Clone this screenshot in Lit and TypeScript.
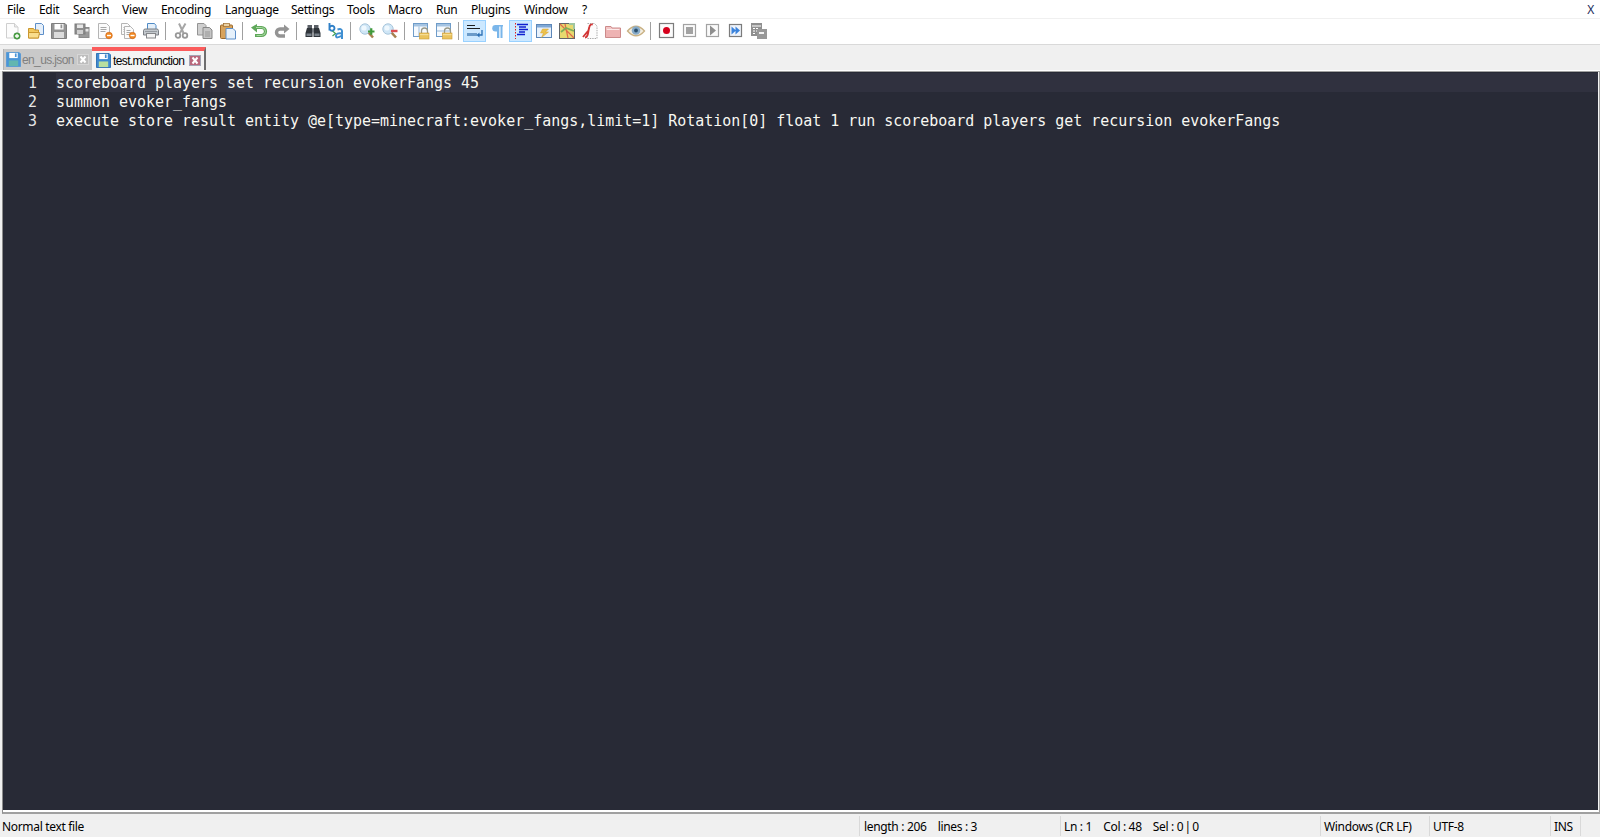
import { LitElement, html, css, svg } from "lit";
import { customElement } from "lit/decorators.js";

const floppy = (body: string, label: string, dark: string) => svg`
  <path d="M.5 .5h13.500l1.500 1.500v13.500h-15z" fill="${body}" stroke="${dark}"/>
  <rect x="3.500" y="1" width="9" height="5.500" fill="#fff"/>
  <rect x="9.500" y="1.500" width="1.800" height="3.800" fill="${body}"/>
  <rect x="3" y="9" width="10" height="6" fill="${label}"/>`;

const pageDoc = (x: number, y: number, w: number, h: number) => svg`
  <path d="M${x + .5} ${y + .5}h${w - 3}l3 3v${h - 3}h-${w}z" fill="#fbfbfb" stroke="#b5b5b5"/>
  <path d="M${x + 2.5} ${y + 4.5}h${w - 5}M${x + 2.5} ${y + 6.5}h${w - 5}M${x + 2.5} ${y + 8.5}h${w - 6}" stroke="#a8a8a8"/>`;

const lock = svg`
  <path d="M8.500 10V8a3 3 0 0 1 6 0v2" fill="none" stroke="#9a9a8a" stroke-width="1.300"/>
  <rect x="6.500" y="10" width="9.500" height="6" fill="#eac35e" stroke="#c99a35" stroke-width=".6"/>
  <rect x="7" y="11" width="8.500" height="1.200" fill="#f6dd94"/>`;

const loupe = (badge: unknown) => svg`
  <path d="M9 9l5 5.500" stroke="#a5814f" stroke-width="2.600"/>
  <circle cx="6" cy="6" r="5.200" fill="#cfe6f6" stroke="#a9c6dc"/>
  <circle cx="5" cy="5" r="2.600" fill="#eff8fe"/>
  ${badge}`;

const icons: Record<string, unknown> = {
  new: svg`
    <path d="M1.500 .5h8l3.500 3.500v11h-11.500z" fill="#fcfcfc" stroke="#cfcfcf"/>
    <path d="M9.500 .5v3.500h3.500" fill="#ececec" stroke="#cfcfcf"/>
    <circle cx="12" cy="13" r="3.200" fill="#54a948" stroke="#2f7d35" stroke-width=".6"/>
    <path d="M10 13h4M12 11v4" stroke="#fff" stroke-width="1.300"/>`,
  open: svg`
    <path d="M7.500 .5h6l2 2v9h-8z" fill="#e5effa" stroke="#5d8fc9"/>
    <path d="M.5 5.500h5l1 1.500h4v8h-10z" fill="#f3c95e" stroke="#c9962f"/>
    <path d="M.5 9.500h11l-1 5.500h-10z" fill="#f9dd8d" stroke="#c9962f"/>`,
  save: floppy("#949494", "#dcdcdc", "#808080"),
  saveall: svg`
    <rect x="5" y="4.500" width="10" height="10" fill="#9a9a9a" stroke="#8a8a8a"/>
    <rect x="1" y="1" width="10" height="10" fill="#8e8e8e" stroke="#7c7c7c"/>
    <rect x="3" y="1.500" width="6" height="3.500" fill="#e6e6e6"/>
    <rect x="3" y="7" width="6" height="4" fill="#cfcfcf"/>
    <rect x="11.500" y="6" width="3" height="2.500" fill="#e6e6e6"/>`,
  close: svg`
    ${pageDoc(1, 0, 11, 15)}
    <circle cx="12" cy="12.500" r="3.300" fill="#f08a24" stroke="#cf5f10" stroke-width=".6"/>
    <path d="M10 12.500h4" stroke="#fff" stroke-width="1.400"/>`,
  closeall: svg`
    ${pageDoc(1, 0, 9, 11)}
    ${pageDoc(4, 3, 9, 12)}
    <circle cx="12.500" cy="12.500" r="3.200" fill="#f08a24" stroke="#cf5f10" stroke-width=".6"/>
    <path d="M10.500 12.500h4" stroke="#fff" stroke-width="1.400"/>`,
  print: svg`
    <path d="M4.500 .5h7l1.500 2v5h-8.500z" fill="#e4eff9" stroke="#4f8ac6"/>
    <path d="M.5 7.500q0-1.500 2-1.500h11q2 0 2 1.500v4.500h-15z" fill="#c3c8cd" stroke="#7a7f85"/>
    <rect x="3.500" y="10.500" width="9" height="4.500" fill="#f4f4f4" stroke="#85878a"/>
    <rect x="2" y="8" width="12" height="1" fill="#959aa0"/>`,
  cut: svg`
    <path d="M11.500 .5l-5.500 9.500M5 .5l4.500 9.500" stroke="#a6a6a6" stroke-width="2" fill="none"/>
    <circle cx="4" cy="12.500" r="2.300" fill="none" stroke="#989898" stroke-width="1.800"/>
    <circle cx="11" cy="12.500" r="2.300" fill="none" stroke="#989898" stroke-width="1.800"/>`,
  copy: svg`
    <path d="M.5 .5h6.500l2 2v9.500h-8.500z" fill="#cfcfcf" stroke="#949494"/>
    <path d="M6 4.500h6.500l2.500 2.500v8.500h-9z" fill="#c6c6c6" stroke="#888"/>
    <path d="M8 9h5M8 11h5M8 13h5" stroke="#989898"/>`,
  paste: svg`
    <rect x=".5" y="2" width="12" height="13.500" rx="1" fill="#d7a35d" stroke="#9c6a2c"/>
    <rect x="3.500" y=".5" width="6" height="3" fill="#ead0a2" stroke="#9c6a2c" stroke-width=".7"/>
    <path d="M6 5.500h7l2.500 2.500v8h-9.500z" fill="#e6f1fb" stroke="#5d8fc9"/>`,
  undo: svg`
    <path d="M4 4.500h6.500a3.800 3.800 0 0 1 0 8h-6.500" fill="none" stroke="#5fa85a" stroke-width="3.200"/>
    <path d="M0 4.500l6-3.500v8.500z" fill="#5fa85a"/>
    <path d="M5 4.500h5.500a3.800 3.800 0 0 1 0 8h-5" fill="none" stroke="#bfe6b8" stroke-width=".8"/>`,
  redo: svg`
    <path d="M11 6h-5a3.300 3.300 0 0 0 0 7h5" fill="none" stroke="#949494" stroke-width="3.400"/>
    <path d="M10 1.500v9l5.500-4.500z" fill="#949494"/>`,
  find: svg`
    <rect x="2.500" y="2" width="4.500" height="4" fill="#5a5f66"/>
    <rect x="9" y="2" width="4.500" height="4" fill="#5a5f66"/>
    <path d="M2 5h5.500v9h-7v-4z" fill="#2f343a"/>
    <path d="M14 5h-5.500v9h7v-4z" fill="#2f343a"/>
    <rect x="7" y="6" width="2" height="3.500" fill="#70757c"/>
    <rect x="1.500" y="10.500" width="5" height="2.500" fill="#79818a"/>
    <rect x="9.500" y="10.500" width="5" height="2.500" fill="#79818a"/>`,
  replace: svg`
    <path d="M1.500 0v7.500M1.500 5.200a2.500 2.500 0 1 1 0 .1" fill="none" stroke="#2f7fc7" stroke-width="1.900"/>
    <path d="M9.500 6.500q4-1.500 4.500 1.500v8M14 10.500q-6-1-6 2.300t6-.3" fill="none" stroke="#3f8fd2" stroke-width="2"/>
    <path d="M4.500 8l3 2.500-3 2.500" fill="none" stroke="#41a05b" stroke-width="1.200"/>`,
  zoomin: loupe(svg`<path d="M9 8.500h6.500M12.250 5.200v6.600" stroke="#3e9a3a" stroke-width="2.200"/>`),
  zoomout: loupe(svg`<path d="M9 8h6.500" stroke="#dc4c50" stroke-width="2.400"/>`),
  syncv: svg`
    <rect x=".5" y=".5" width="14" height="13" fill="#f6fafe" stroke="#6f9cc9"/>
    <rect x="1" y="1" width="13" height="2.500" fill="#a5c4e2"/>
    <path d="M6 3.500v10" stroke="#9dbbd8"/>
    ${lock}`,
  synch: svg`
    <rect x=".5" y=".5" width="14" height="13" fill="#f6fafe" stroke="#6f9cc9"/>
    <rect x="1" y="1" width="13" height="2.500" fill="#a5c4e2"/>
    <path d="M1 8h13" stroke="#9dbbd8"/>
    ${lock}`,
  wrap: svg`
    <path d="M0 2.500h8M0 5.500h13" stroke="#1d1d1d" stroke-width="1.200"/>
    <rect x="0" y="10" width="10" height="3" fill="#6b9bc9"/>
    <path d="M15 7v5h-4" fill="none" stroke="#2b6fb4" stroke-width="1.300"/>
    <path d="M12.500 9.500v5l-3-2.500z" fill="#2b6fb4"/>`,
  para: svg`
    <path d="M8 2H5.500a3.200 3.200 0 0 0 0 6.500H8z" fill="#7ab6ea"/>
    <rect x="7" y="2" width="2.300" height="13" fill="#7ab6ea"/>
    <rect x="10.500" y="2" width="2" height="13" fill="#7ab6ea"/>
    <rect x="5" y="2" width="8" height="1.500" fill="#7ab6ea"/>`,
  indent: svg`
    <path d="M4 1.500h11M6 4h7M6 6.500h9M6 9h6M4 11.500h8" stroke="#0f1fd0" stroke-width="1.400"/>
    <path d="M2.500 0v16" stroke="#e02020" stroke-dasharray="1.500 1.500"/>`,
  folderws: svg`
    <rect x=".5" y="1.500" width="15" height="13" fill="#e8f1fb" stroke="#5d87b8"/>
    <rect x="1" y="2" width="14" height="2.500" fill="#7fa8d6"/>
    <path d="M6.500 6h6l-3 3h3l-7 5.500 2-4.500h-3z" fill="#edc24d" stroke="#d5a330" stroke-width=".5"/>`,
  docmap: svg`
    <rect x=".5" y=".5" width="15" height="15" fill="#e7d96f" stroke="#5f6468"/>
    <path d="M1 1l14 14M6 1l3 14" stroke="#e06a4a" stroke-width="1.200"/>
    <path d="M2 9l5-4 8 3" stroke="#7fae5a" stroke-width="1.800" fill="none"/>
    <path d="M10 1h5v5" stroke="#9fc6a0" stroke-width="2" fill="none"/>`,
  func: svg`
    <path d="M5.500 .5h7l2.500 2.500v12.500h-10" fill="#fcfcfc" stroke="#a8a8a8" stroke-dasharray="1.400 1"/>
    <path d="M1 14l5-6M3 14.500c3 0 3-4 3.500-7l.8-3.500c.4-2.200 2-3 3.500-2.500" fill="none" stroke="#d23535" stroke-width="1.900"/>`,
  folder: svg`
    <path d="M.5 3.500h5.500l1 1.500h8.500v9.500h-15z" fill="#f3c6c6" stroke="#cc8a8a"/>
    <rect x="1" y="7" width="14" height="7" fill="#eeb3b3"/>
    <rect x="2" y="6" width="12" height="1" fill="#fbeaea"/>`,
  eye: svg`
    <path d="M-.5 8Q8 -1.500 16.500 8 8 17.500 -.5 8z" fill="#f4eee0" stroke="#c9b184" stroke-width="1.300"/>
    <circle cx="8" cy="7.500" r="4.300" fill="#86aac8"/>
    <circle cx="8" cy="7.500" r="1.900" fill="#2c4f6c"/>`,
  rec: svg`
    <rect x=".5" y=".5" width="14" height="14" fill="#fbfbfb" stroke="#7c7c7c" stroke-width="1.200"/>
    <circle cx="7.500" cy="7.500" r="3.500" fill="#d6001c"/>`,
  stop: svg`
    <rect x="1.500" y="1.500" width="12" height="12" fill="#fafafa" stroke="#a2a2a2" stroke-width="1.200"/>
    <rect x="4" y="4" width="7" height="7" fill="#a2a2a2"/>`,
  play: svg`
    <rect x="1.500" y="1.500" width="12" height="12" fill="#fafafa" stroke="#a2a2a2" stroke-width="1.200"/>
    <path d="M5 2.500l6 5-6 5z" fill="#8e8e8e"/>`,
  runmany: svg`
    <rect x="1.500" y="1.500" width="12" height="12" fill="#eef3fb" stroke="#7b7b7b" stroke-width="1.200"/>
    <path d="M3.500 3.500l4.500 4-4.500 4zM7.500 3.500l4.500 4-4.500 4z" fill="#3a83dc"/>`,
  savemacro: svg`
    <rect x="0" y="0" width="11" height="13" fill="#8f8f8f"/>
    <path d="M1 3h9M2 5.500h2M5 5.500h2M2 8h2M5 8h2M2 10.500h2" stroke="#fff"/>
    <rect x="6" y="6" width="10" height="10" fill="#989898"/>
    <path d="M8 9h5v2h-5z" fill="#f2f2f2"/>`,
};

const toolbar: (string | null)[] = [
  "new", "open", "save", "saveall", "close", "closeall", "print", null,
  "cut", "copy", "paste", null,
  "undo", "redo", null,
  "find", "replace", null,
  "zoomin", "zoomout", null,
  "syncv", "synch", null,
  "wrap", "para", "indent", "folderws", "docmap", "func", "folder", "eye", null,
  "rec", "stop", "play", "runmany", "savemacro",
];

const menus: [string, number][] = [
  ["File", 32], ["Edit", 34], ["Search", 49], ["View", 39], ["Encoding", 64], ["Language", 66],
  ["Settings", 56], ["Tools", 41], ["Macro", 48], ["Run", 35], ["Plugins", 53], ["Window", 58], ["?", 20],
];

const lines = [
  "scoreboard players set recursion evokerFangs 45",
  "summon evoker_fangs",
  "execute store result entity @e[type=minecraft:evoker_fangs,limit=1] Rotation[0] float 1 run scoreboard players get recursion evokerFangs",
];

@customElement("app-root")
export class AppRoot extends LitElement {
  static styles = css`
    :host {
      display: flex;
      flex-direction: column;
      width: 1600px;
      height: 837px;
      overflow: hidden;
      background: #f0f0f0;
      font-family: "Noto Sans", "Open Sans", sans-serif;
      font-size: 12px;
      color: #000;
    }
    .menubar {
      display: flex;
      align-items: flex-start;
      height: 18px;
      padding-left: 7px;
      background: #fff;
      letter-spacing: -0.3px;
    }
    .menu { flex: none; line-height: 20px; }
    .win-x { margin-left: auto; margin-right: 6px; color: #1a2a5a; line-height: 20px; }
    .toolstrip {
      height: 26px;
      margin-top: 1px;
      display: flex;
      align-items: flex-start;
      padding: 1px 0 0 1px;
      background: #fff;
      border-bottom: 1px solid #d9d9d9;
      box-sizing: border-box;
    }
    .tool {
      flex: none;
      width: 23px;
      height: 22px;
      display: flex;
      align-items: center;
      justify-content: center;
      box-sizing: border-box;
    }
    .tool.on { background: #cce8ff; border: 1px solid #99d1ff; }
    .tool svg { display: block; width: 16px; height: 16px; overflow: visible; }
    .sep { flex: none; width: 8px; height: 18px; margin-top: 2px; padding-left: 3px; box-sizing: border-box; }
    .sep i { display: block; width: 1px; height: 100%; background: #a0a0a0; }
    .tabs {
      height: 25px;
      display: flex;
      align-items: flex-end;
      padding-left: 3px;
      box-sizing: border-box;
      font-family: "Liberation Sans", Arial, sans-serif;
      letter-spacing: -0.62px;
    }
    .tab {
      display: flex;
      align-items: center;
      box-sizing: border-box;
      flex: none;
    }
    .tab.off {
      width: 89px;
      height: 21px;
      padding: 0 3px 0 2px;
      background: #c9c9c9;
      color: #808080;
      border-left: 1px solid #b4b4b4;
    }
    .tab.active {
      width: 114px;
      height: 23px;
      padding: 0 3px 0 4px;
      background: #f4f4f4;
      border-top: 4px solid #fb5c5c;
      border-right: 2px solid #6e6e6e;
    }
    .tab svg { flex: none; width: 15px; height: 15px; }
    .tab .name { flex: 1; padding-left: 1px; }
    .tab.active .name { padding-left: 2px; }
    .tab svg.x { flex: none; display: block; width: 12px; height: 11px; }
    .frame {
      flex: 1;
      min-height: 0;
      display: flex;
      border-top: 1px solid #fff;
      padding-left: 2px;
    }
    .outer {
      flex: 1;
      display: flex;
      border: 1px solid #a0a0a0;
      border-bottom-width: 2px;
      border-left-color: #8c8c8c;
    }
    .inner {
      flex: 1;
      border-right: 1px solid #f5f5f5;
      border-bottom: 2px solid #fff;
      background: #282a36;
      color: #f8f8f2;
      font-family: "DejaVu Sans Mono", monospace;
      font-size: 14.965px;
      line-height: 21px;
    }
    .line { display: grid; grid-template-columns: 53px 1fr; height: 19px; }
    .line.cur { height: 20px; padding-top: 1px; box-sizing: border-box; }
    .num { text-align: right; padding-right: 19px; color: #e6e6e6; }
    .code { white-space: pre; height: 19px; }
    .cur .code { background: #30313f; }
    .status {
      height: 23px;
      display: flex;
      align-items: flex-start;
      padding-top: 2px;
      box-sizing: border-box;
      letter-spacing: -0.33px;
      white-space: pre;
    }
    .cell {
      flex: none;
      height: 20px;
      line-height: 22px;
      box-sizing: border-box;
      padding-left: 3px;
      border-right: 1px solid #d9d9d9;
    }
    .c1 { width: 860px; padding-left: 2px; }
    .c2 { width: 201px; padding-left: 4px; }
    .c3 { width: 260px; }
    .c4 { width: 109px; }
    .c5 { width: 121px; }
    .c6 { width: 30px; }
    .tight { word-spacing: -1.500px; }
  `;

  private closeBox(active: boolean) {
    const fill = active ? "#b9687c" : "#bdbdbd";
    const edge = active ? "#a5a5b5" : "#d6d6d6";
    return html`<svg class="x" viewBox="0 0 12 11">
      <rect x=".5" y=".5" width="11" height="10" fill="${fill}" stroke="${edge}"/>
      <path d="M3.500 2.500l5 6M8.500 2.500l-5 6" stroke="#fff" stroke-width="2"/>
    </svg>`;
  }

  private tabIcon(active: boolean) {
    return html`<svg viewBox="0 0 16 16">
      ${floppy(active ? "#3f8ad2" : "#4a95d8", active ? "#b9df9f" : "#63b6b0", active ? "#2d6fb0" : "#5a9ad4")}
    </svg>`;
  }

  render() {
    return html`
      <div class="menubar">
        ${menus.map(([m, w]) => html`<span class="menu" style="width:${w}px">${m}</span>`)}
        <span class="win-x">X</span>
      </div>
      <div class="toolstrip">
        ${toolbar.map((t) =>
          t === null
            ? html`<div class="sep"><i></i></div>`
            : html`<div class="tool ${t === "wrap" || t === "indent" ? "on" : ""}">
                <svg viewBox="0 0 16 16">${icons[t]}</svg>
              </div>`
        )}
      </div>
      <div class="tabs">
        <div class="tab off">${this.tabIcon(false)}<span class="name">en_us.json</span>${this.closeBox(false)}</div>
        <div class="tab active">${this.tabIcon(true)}<span class="name">test.mcfunction</span>${this.closeBox(true)}</div>
      </div>
      <div class="frame">
        <div class="outer">
          <div class="inner">
            ${lines.map(
              (l, i) => html`<div class="line ${i === 0 ? "cur" : ""}">
                <div class="num">${i + 1}</div>
                <div class="code">${l}</div>
              </div>`
            )}
          </div>
        </div>
      </div>
      <div class="status">
        <div class="cell c1">Normal text file</div>
        <div class="cell c2">length : 206    lines : 3</div>
        <div class="cell c3">Ln : 1    Col : 48    Sel : <span class="tight">0 | 0</span></div>
        <div class="cell c4">Windows (CR LF)</div>
        <div class="cell c5">UTF-8</div>
        <div class="cell c6">INS</div>
      </div>
    `;
  }
}
